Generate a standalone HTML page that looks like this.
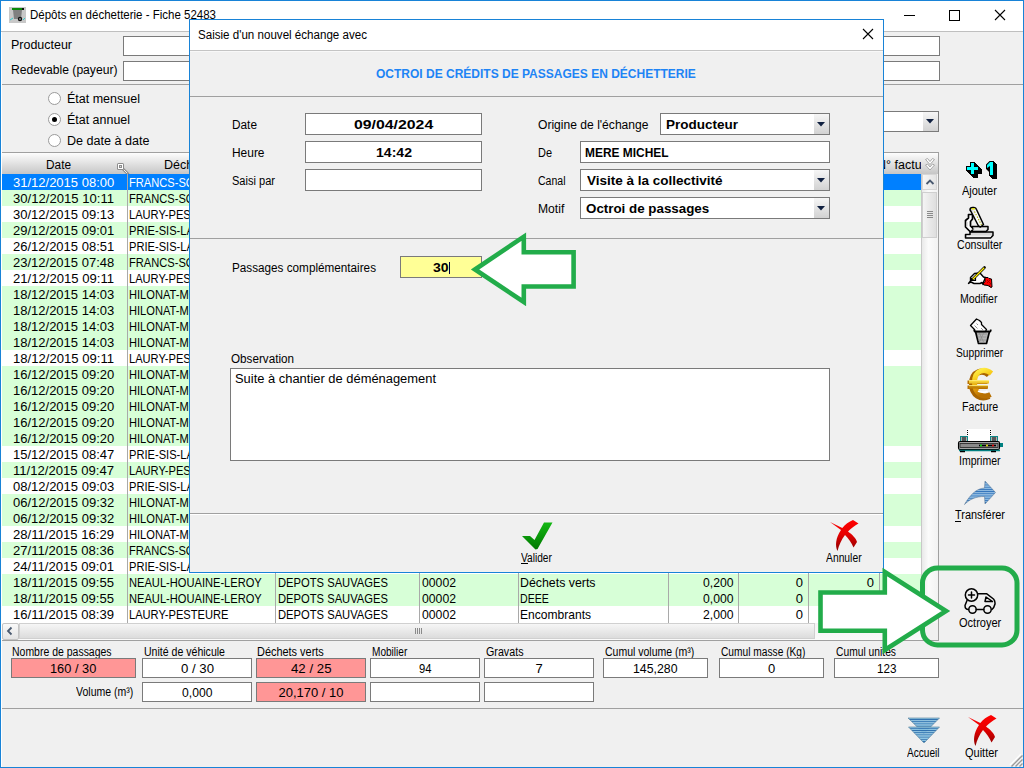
<!DOCTYPE html>
<html><head><meta charset="utf-8"><style>
html,body{margin:0;padding:0;width:1024px;height:768px;overflow:hidden;background:#f0f0f0}
body{position:relative;font-family:"Liberation Sans", sans-serif;color:#000}
div{position:absolute}
.t{white-space:pre}
svg{position:absolute}
</style></head><body>
<div style="position:absolute;left:0px;top:0px;width:1024px;height:768px;background:#f0f0f0"></div>
<div style="position:absolute;left:1px;top:1px;width:1022px;height:30px;background:#fff"></div>
<div style="position:absolute;left:1px;top:31px;width:1022px;height:1px;background:#bfbfbf"></div>
<div style="position:absolute;left:1px;top:32px;width:1px;height:735px;background:#fff"></div>
<svg style="position:absolute;left:9px;top:7px" width="17" height="16" viewBox="0 0 17 16"><rect x="0" y="0" width="17" height="16" fill="#c8c8c8"/>
<rect x="3" y="1" width="12" height="2" fill="#0a8a0a"/><rect x="13" y="1" width="2" height="2" fill="#111"/>
<path d="M4 3 L13 3 L12 12 L5 12 Z" fill="#808080"/>
<circle cx="11" cy="12" r="2.2" fill="#111"/><circle cx="11" cy="12" r="0.8" fill="#ccc"/>
<path d="M1 13 L4 11 M14 13 L16 11" stroke="#3cc" stroke-width="1"/></svg>
<div class="t" style="left:30.00px;top:9.00px;font-size:12px;line-height:12px;transform:scaleX(0.9581);transform-origin:0 0;">Dépôts en déchetterie - Fiche 52483</div>
<div style="position:absolute;left:904px;top:15px;width:11px;height:1px;background:#000"></div>
<div style="position:absolute;left:949px;top:10px;width:11px;height:11px;box-sizing:border-box;border:1px solid #000"></div>
<svg style="position:absolute;left:994px;top:9px" width="12" height="12" viewBox="0 0 12 12"><path d="M1 1 L11 11 M11 1 L1 11" stroke="#000" stroke-width="1.1"/></svg>
<div class="t" style="left:11.00px;top:39.00px;font-size:12px;line-height:12px;transform:scaleX(1.0391);transform-origin:0 0;">Producteur</div>
<div class="t" style="left:11.00px;top:64.00px;font-size:12px;line-height:12px;transform:scaleX(1.0104);transform-origin:0 0;">Redevable (payeur)</div>
<div style="position:absolute;left:123px;top:36px;width:817px;height:20px;box-sizing:border-box;border:1px solid #7a7a7a;background:#fff"></div>
<div style="position:absolute;left:123px;top:61px;width:817px;height:20px;box-sizing:border-box;border:1px solid #7a7a7a;background:#fff"></div>
<div style="position:absolute;left:2px;top:84px;width:1021px;height:1px;background:#a0a0a0"></div>
<svg style="position:absolute;left:48px;top:92px" width="13" height="13" viewBox="0 0 13 13"><circle cx="6.5" cy="6.5" r="6" fill="#fff" stroke="#9a9a9a" stroke-width="1"/></svg>
<svg style="position:absolute;left:48px;top:113px" width="13" height="13" viewBox="0 0 13 13"><circle cx="6.5" cy="6.5" r="6" fill="#fff" stroke="#9a9a9a" stroke-width="1"/><circle cx="6.5" cy="6.5" r="2.5" fill="#000"/></svg>
<svg style="position:absolute;left:48px;top:134px" width="13" height="13" viewBox="0 0 13 13"><circle cx="6.5" cy="6.5" r="6" fill="#fff" stroke="#9a9a9a" stroke-width="1"/></svg>
<div class="t" style="left:67.00px;top:92.75px;font-size:12.5px;line-height:12.5px;">État mensuel</div>
<div class="t" style="left:67.00px;top:113.75px;font-size:12.5px;line-height:12.5px;transform:scaleX(0.9960);transform-origin:0 0;">État annuel</div>
<div class="t" style="left:67.00px;top:134.75px;font-size:12.5px;line-height:12.5px;transform:scaleX(1.0059);transform-origin:0 0;">De date à date</div>
<div style="position:absolute;left:600px;top:111px;width:339px;height:21px;box-sizing:border-box;border:1px solid #7a7a7a;background:#fff"></div>
<div style="position:absolute;left:923px;top:112px;width:15px;height:19px;background:linear-gradient(#f6f6f6,#d2d2d2)"></div>
<svg style="position:absolute;left:925px;top:117px" width="10" height="8" viewBox="0 0 10 8"><path d="M1 2 L9 2 L5 6.5 Z" fill="#102040"/></svg>
<div style="position:absolute;left:2px;top:152px;width:937px;height:489px;box-sizing:border-box;border:1px solid #a0a0a0;border-left:none;background:#fff"></div>
<div style="position:absolute;left:2px;top:153px;width:936px;height:21px;background:linear-gradient(#fdfdfd,#c6c6c6)"></div>
<div class="t" style="left:46.00px;top:158.75px;font-size:12.5px;line-height:12.5px;transform:scaleX(0.9467);transform-origin:0 0;">Date</div>
<div class="t" style="left:164.00px;top:158.75px;font-size:12.5px;line-height:12.5px;">Déchetterie</div>
<div style="left:884px;top:153px;width:37px;height:21px;overflow:hidden"><div class="t" style="left:-7.00px;top:5.75px;font-size:12.5px;line-height:12.5px;">N° facture</div></div>
<svg style="position:absolute;left:112px;top:158px" width="20" height="18" viewBox="0 0 20 18"><path d="M11 11 L15.6 15.6" stroke="#8c8c8c" stroke-width="2.6" stroke-linecap="square"/><path d="M11.5 11.5 L15.2 15.2" stroke="#fff" stroke-width="0.9"/><rect x="5" y="5" width="7" height="7" rx="1.6" fill="#8c8c8c"/><rect x="6" y="6" width="5" height="5" fill="#fff"/><rect x="7" y="7" width="3" height="3" fill="#8c8c8c"/><rect x="8" y="8" width="1" height="1" fill="#ddd"/></svg>
<svg style="position:absolute;left:924px;top:157px" width="12" height="15" viewBox="0 0 12 15"><g fill="#fff" stroke="#a8a8a8" stroke-width="1" stroke-linejoin="miter"><path d="M1.5 2.5 L3.5 1.5 L6 4.5 L8.5 1.5 L10.5 2.5 L6 7.5 Z"/><path d="M1.5 8 L3.5 7 L6 10 L8.5 7 L10.5 8 L6 13 Z"/></g></svg>
<div style="position:absolute;left:2px;top:174px;width:920px;height:16px;background:#0080ff"></div>
<div class="t" style="left:13.00px;top:176.00px;font-size:13px;line-height:13px;color:#fff;">31/12/2015 08:00</div>
<div class="t" style="left:129.00px;top:176.00px;font-size:13px;line-height:13px;color:#fff;transform:scaleX(0.8550);transform-origin:0 0;">FRANCS-SOLEIL</div>
<div style="position:absolute;left:2px;top:190px;width:920px;height:16px;background:#d7ffd7"></div>
<div class="t" style="left:13.00px;top:192.00px;font-size:13px;line-height:13px;transform:scaleX(1.0075);transform-origin:0 0;">30/12/2015 10:11</div>
<div class="t" style="left:129.00px;top:192.00px;font-size:13px;line-height:13px;transform:scaleX(0.8550);transform-origin:0 0;">FRANCS-SOLEIL</div>
<div style="position:absolute;left:2px;top:206px;width:920px;height:16px;background:#fff"></div>
<div class="t" style="left:13.00px;top:208.00px;font-size:13px;line-height:13px;">30/12/2015 09:13</div>
<div class="t" style="left:129.00px;top:208.00px;font-size:13px;line-height:13px;transform:scaleX(0.8550);transform-origin:0 0;">LAURY-PESTEURE</div>
<div style="position:absolute;left:2px;top:222px;width:920px;height:16px;background:#d7ffd7"></div>
<div class="t" style="left:13.00px;top:224.00px;font-size:13px;line-height:13px;">29/12/2015 09:01</div>
<div class="t" style="left:129.00px;top:224.00px;font-size:13px;line-height:13px;transform:scaleX(0.8550);transform-origin:0 0;">PRIE-SIS-LAVAL</div>
<div style="position:absolute;left:2px;top:238px;width:920px;height:16px;background:#fff"></div>
<div class="t" style="left:13.00px;top:240.00px;font-size:13px;line-height:13px;">26/12/2015 08:51</div>
<div class="t" style="left:129.00px;top:240.00px;font-size:13px;line-height:13px;transform:scaleX(0.8550);transform-origin:0 0;">PRIE-SIS-LAVAL</div>
<div style="position:absolute;left:2px;top:254px;width:920px;height:16px;background:#d7ffd7"></div>
<div class="t" style="left:13.00px;top:256.00px;font-size:13px;line-height:13px;">23/12/2015 07:48</div>
<div class="t" style="left:129.00px;top:256.00px;font-size:13px;line-height:13px;transform:scaleX(0.8550);transform-origin:0 0;">FRANCS-SOLEIL</div>
<div style="position:absolute;left:2px;top:270px;width:920px;height:16px;background:#fff"></div>
<div class="t" style="left:13.00px;top:272.00px;font-size:13px;line-height:13px;transform:scaleX(1.0075);transform-origin:0 0;">21/12/2015 09:11</div>
<div class="t" style="left:129.00px;top:272.00px;font-size:13px;line-height:13px;transform:scaleX(0.8550);transform-origin:0 0;">LAURY-PESTEURE</div>
<div style="position:absolute;left:2px;top:286px;width:920px;height:16px;background:#d7ffd7"></div>
<div class="t" style="left:13.00px;top:288.00px;font-size:13px;line-height:13px;">18/12/2015 14:03</div>
<div class="t" style="left:129.00px;top:288.00px;font-size:13px;line-height:13px;transform:scaleX(0.8550);transform-origin:0 0;">HILONAT-MONT</div>
<div style="position:absolute;left:2px;top:302px;width:920px;height:16px;background:#d7ffd7"></div>
<div class="t" style="left:13.00px;top:304.00px;font-size:13px;line-height:13px;">18/12/2015 14:03</div>
<div class="t" style="left:129.00px;top:304.00px;font-size:13px;line-height:13px;transform:scaleX(0.8550);transform-origin:0 0;">HILONAT-MONT</div>
<div style="position:absolute;left:2px;top:318px;width:920px;height:16px;background:#d7ffd7"></div>
<div class="t" style="left:13.00px;top:320.00px;font-size:13px;line-height:13px;">18/12/2015 14:03</div>
<div class="t" style="left:129.00px;top:320.00px;font-size:13px;line-height:13px;transform:scaleX(0.8550);transform-origin:0 0;">HILONAT-MONT</div>
<div style="position:absolute;left:2px;top:334px;width:920px;height:16px;background:#d7ffd7"></div>
<div class="t" style="left:13.00px;top:336.00px;font-size:13px;line-height:13px;">18/12/2015 14:03</div>
<div class="t" style="left:129.00px;top:336.00px;font-size:13px;line-height:13px;transform:scaleX(0.8550);transform-origin:0 0;">HILONAT-MONT</div>
<div style="position:absolute;left:2px;top:350px;width:920px;height:16px;background:#fff"></div>
<div class="t" style="left:13.00px;top:352.00px;font-size:13px;line-height:13px;transform:scaleX(1.0075);transform-origin:0 0;">18/12/2015 09:11</div>
<div class="t" style="left:129.00px;top:352.00px;font-size:13px;line-height:13px;transform:scaleX(0.8550);transform-origin:0 0;">LAURY-PESTEURE</div>
<div style="position:absolute;left:2px;top:366px;width:920px;height:16px;background:#d7ffd7"></div>
<div class="t" style="left:13.00px;top:368.00px;font-size:13px;line-height:13px;">16/12/2015 09:20</div>
<div class="t" style="left:129.00px;top:368.00px;font-size:13px;line-height:13px;transform:scaleX(0.8550);transform-origin:0 0;">HILONAT-MONT</div>
<div style="position:absolute;left:2px;top:382px;width:920px;height:16px;background:#d7ffd7"></div>
<div class="t" style="left:13.00px;top:384.00px;font-size:13px;line-height:13px;">16/12/2015 09:20</div>
<div class="t" style="left:129.00px;top:384.00px;font-size:13px;line-height:13px;transform:scaleX(0.8550);transform-origin:0 0;">HILONAT-MONT</div>
<div style="position:absolute;left:2px;top:398px;width:920px;height:16px;background:#d7ffd7"></div>
<div class="t" style="left:13.00px;top:400.00px;font-size:13px;line-height:13px;">16/12/2015 09:20</div>
<div class="t" style="left:129.00px;top:400.00px;font-size:13px;line-height:13px;transform:scaleX(0.8550);transform-origin:0 0;">HILONAT-MONT</div>
<div style="position:absolute;left:2px;top:414px;width:920px;height:16px;background:#d7ffd7"></div>
<div class="t" style="left:13.00px;top:416.00px;font-size:13px;line-height:13px;">16/12/2015 09:20</div>
<div class="t" style="left:129.00px;top:416.00px;font-size:13px;line-height:13px;transform:scaleX(0.8550);transform-origin:0 0;">HILONAT-MONT</div>
<div style="position:absolute;left:2px;top:430px;width:920px;height:16px;background:#d7ffd7"></div>
<div class="t" style="left:13.00px;top:432.00px;font-size:13px;line-height:13px;">16/12/2015 09:20</div>
<div class="t" style="left:129.00px;top:432.00px;font-size:13px;line-height:13px;transform:scaleX(0.8550);transform-origin:0 0;">HILONAT-MONT</div>
<div style="position:absolute;left:2px;top:446px;width:920px;height:16px;background:#fff"></div>
<div class="t" style="left:13.00px;top:448.00px;font-size:13px;line-height:13px;">15/12/2015 08:47</div>
<div class="t" style="left:129.00px;top:448.00px;font-size:13px;line-height:13px;transform:scaleX(0.8550);transform-origin:0 0;">PRIE-SIS-LAVAL</div>
<div style="position:absolute;left:2px;top:462px;width:920px;height:16px;background:#d7ffd7"></div>
<div class="t" style="left:13.00px;top:464.00px;font-size:13px;line-height:13px;transform:scaleX(1.0075);transform-origin:0 0;">11/12/2015 09:47</div>
<div class="t" style="left:129.00px;top:464.00px;font-size:13px;line-height:13px;transform:scaleX(0.8550);transform-origin:0 0;">LAURY-PESTEURE</div>
<div style="position:absolute;left:2px;top:478px;width:920px;height:16px;background:#fff"></div>
<div class="t" style="left:13.00px;top:480.00px;font-size:13px;line-height:13px;">08/12/2015 09:03</div>
<div class="t" style="left:129.00px;top:480.00px;font-size:13px;line-height:13px;transform:scaleX(0.8550);transform-origin:0 0;">PRIE-SIS-LAVAL</div>
<div style="position:absolute;left:2px;top:494px;width:920px;height:16px;background:#d7ffd7"></div>
<div class="t" style="left:13.00px;top:496.00px;font-size:13px;line-height:13px;">06/12/2015 09:32</div>
<div class="t" style="left:129.00px;top:496.00px;font-size:13px;line-height:13px;transform:scaleX(0.8550);transform-origin:0 0;">HILONAT-MONT</div>
<div style="position:absolute;left:2px;top:510px;width:920px;height:16px;background:#d7ffd7"></div>
<div class="t" style="left:13.00px;top:512.00px;font-size:13px;line-height:13px;">06/12/2015 09:32</div>
<div class="t" style="left:129.00px;top:512.00px;font-size:13px;line-height:13px;transform:scaleX(0.8550);transform-origin:0 0;">HILONAT-MONT</div>
<div style="position:absolute;left:2px;top:526px;width:920px;height:16px;background:#fff"></div>
<div class="t" style="left:13.00px;top:528.00px;font-size:13px;line-height:13px;transform:scaleX(1.0075);transform-origin:0 0;">28/11/2015 16:29</div>
<div class="t" style="left:129.00px;top:528.00px;font-size:13px;line-height:13px;transform:scaleX(0.8550);transform-origin:0 0;">HILONAT-MONT</div>
<div style="position:absolute;left:2px;top:542px;width:920px;height:16px;background:#d7ffd7"></div>
<div class="t" style="left:13.00px;top:544.00px;font-size:13px;line-height:13px;transform:scaleX(1.0075);transform-origin:0 0;">27/11/2015 08:36</div>
<div class="t" style="left:129.00px;top:544.00px;font-size:13px;line-height:13px;transform:scaleX(0.8550);transform-origin:0 0;">FRANCS-SOLEIL</div>
<div style="position:absolute;left:2px;top:558px;width:920px;height:16px;background:#fff"></div>
<div class="t" style="left:13.00px;top:560.00px;font-size:13px;line-height:13px;transform:scaleX(1.0075);transform-origin:0 0;">24/11/2015 09:01</div>
<div class="t" style="left:129.00px;top:560.00px;font-size:13px;line-height:13px;transform:scaleX(0.8550);transform-origin:0 0;">PRIE-SIS-LAVAL</div>
<div style="position:absolute;left:2px;top:574px;width:920px;height:16px;background:#d7ffd7"></div>
<div class="t" style="left:13.00px;top:576.00px;font-size:13px;line-height:13px;transform:scaleX(1.0075);transform-origin:0 0;">18/11/2015 09:55</div>
<div class="t" style="left:129.00px;top:576.00px;font-size:13px;line-height:13px;transform:scaleX(0.8550);transform-origin:0 0;">NEAUL-HOUAINE-LEROY</div>
<div class="t" style="left:278.00px;top:576.00px;font-size:13px;line-height:13px;transform:scaleX(0.8618);transform-origin:0 0;">DEPOTS SAUVAGES</div>
<div class="t" style="left:421.50px;top:576.00px;font-size:13px;line-height:13px;transform:scaleX(0.9404);transform-origin:0 0;">00002</div>
<div class="t" style="left:520.30px;top:576.00px;font-size:13px;line-height:13px;transform:scaleX(0.9499);transform-origin:0 0;">Déchets verts</div>
<div class="t" style="left:702.50px;top:576.00px;font-size:13px;line-height:13px;transform:scaleX(0.9371);transform-origin:0 0;">0,200</div>
<div class="t" style="left:795.77px;top:576.00px;font-size:13px;line-height:13px;">0</div>
<div class="t" style="left:866.77px;top:576.00px;font-size:13px;line-height:13px;">0</div>
<div style="position:absolute;left:2px;top:590px;width:920px;height:16px;background:#d7ffd7"></div>
<div class="t" style="left:13.00px;top:592.00px;font-size:13px;line-height:13px;transform:scaleX(1.0075);transform-origin:0 0;">18/11/2015 09:55</div>
<div class="t" style="left:129.00px;top:592.00px;font-size:13px;line-height:13px;transform:scaleX(0.8550);transform-origin:0 0;">NEAUL-HOUAINE-LEROY</div>
<div class="t" style="left:278.00px;top:592.00px;font-size:13px;line-height:13px;transform:scaleX(0.8618);transform-origin:0 0;">DEPOTS SAUVAGES</div>
<div class="t" style="left:421.50px;top:592.00px;font-size:13px;line-height:13px;transform:scaleX(0.9404);transform-origin:0 0;">00002</div>
<div class="t" style="left:520.30px;top:592.00px;font-size:13px;line-height:13px;transform:scaleX(0.8134);transform-origin:0 0;">DEEE</div>
<div class="t" style="left:702.50px;top:592.00px;font-size:13px;line-height:13px;transform:scaleX(0.9371);transform-origin:0 0;">0,000</div>
<div class="t" style="left:795.77px;top:592.00px;font-size:13px;line-height:13px;">0</div>
<div class="t" style="left:866.77px;top:592.00px;font-size:13px;line-height:13px;">0</div>
<div style="position:absolute;left:2px;top:606px;width:920px;height:16px;background:#fff"></div>
<div class="t" style="left:13.00px;top:608.00px;font-size:13px;line-height:13px;transform:scaleX(1.0075);transform-origin:0 0;">16/11/2015 08:39</div>
<div class="t" style="left:129.00px;top:608.00px;font-size:13px;line-height:13px;transform:scaleX(0.8550);transform-origin:0 0;">LAURY-PESTEURE</div>
<div class="t" style="left:278.00px;top:608.00px;font-size:13px;line-height:13px;transform:scaleX(0.8618);transform-origin:0 0;">DEPOTS SAUVAGES</div>
<div class="t" style="left:421.50px;top:608.00px;font-size:13px;line-height:13px;transform:scaleX(0.9404);transform-origin:0 0;">00002</div>
<div class="t" style="left:520.30px;top:608.00px;font-size:13px;line-height:13px;transform:scaleX(0.9270);transform-origin:0 0;">Encombrants</div>
<div class="t" style="left:702.50px;top:608.00px;font-size:13px;line-height:13px;transform:scaleX(0.9371);transform-origin:0 0;">2,000</div>
<div class="t" style="left:795.77px;top:608.00px;font-size:13px;line-height:13px;">0</div>
<div class="t" style="left:866.77px;top:608.00px;font-size:13px;line-height:13px;">0</div>
<div style="position:absolute;left:127px;top:174px;width:1px;height:449px;background:#a9a9a9"></div>
<div style="position:absolute;left:275px;top:174px;width:1px;height:449px;background:#a9a9a9"></div>
<div style="position:absolute;left:419px;top:174px;width:1px;height:449px;background:#a9a9a9"></div>
<div style="position:absolute;left:518px;top:174px;width:1px;height:449px;background:#a9a9a9"></div>
<div style="position:absolute;left:668px;top:174px;width:1px;height:449px;background:#a9a9a9"></div>
<div style="position:absolute;left:738px;top:174px;width:1px;height:449px;background:#a9a9a9"></div>
<div style="position:absolute;left:808px;top:174px;width:1px;height:449px;background:#a9a9a9"></div>
<div style="position:absolute;left:879px;top:174px;width:1px;height:449px;background:#a9a9a9"></div>
<div style="position:absolute;left:922px;top:174px;width:16px;height:449px;background:linear-gradient(90deg,#e9e9e9,#fbfbfb 40%,#f2f2f2)"></div>
<div style="position:absolute;left:921px;top:174px;width:1px;height:466px;background:#c8c8c8"></div>
<div style="position:absolute;left:922px;top:174px;width:15px;height:16px;box-sizing:border-box;border:1px solid #d6d6d6;background:linear-gradient(90deg,#f6f6f6,#e4e4e4)"></div>
<svg style="position:absolute;left:925px;top:178px" width="10" height="8" viewBox="0 0 10 8"><path d="M1.5 6 L5 2.5 L8.5 6" fill="none" stroke="#4a5a70" stroke-width="1.8"/></svg>
<div style="position:absolute;left:922px;top:192px;width:15px;height:46px;box-sizing:border-box;border:1px solid #cfcfcf;background:linear-gradient(90deg,#f4f4f4,#dedede)"></div>
<div style="position:absolute;left:927px;top:211px;width:6px;height:1px;background:#8a8a8a"></div>
<div style="position:absolute;left:927px;top:213px;width:6px;height:1px;background:#8a8a8a"></div>
<div style="position:absolute;left:927px;top:215px;width:6px;height:1px;background:#8a8a8a"></div>
<div style="position:absolute;left:927px;top:217px;width:6px;height:1px;background:#8a8a8a"></div>
<div style="position:absolute;left:2px;top:623px;width:920px;height:17px;background:linear-gradient(#f4f4f4,#fafafa)"></div>
<div style="position:absolute;left:2px;top:623px;width:17px;height:17px;box-sizing:border-box;border:1px solid #c4c4c4;border-radius:2px;background:linear-gradient(#f9f9f9,#e4e4e4)"></div>
<svg style="position:absolute;left:5px;top:626px" width="10" height="10" viewBox="0 0 10 10"><path d="M6.5 1.5 L3 5 L6.5 8.5" fill="none" stroke="#4a5a70" stroke-width="1.8"/></svg>
<div style="position:absolute;left:19px;top:623px;width:796px;height:16px;box-sizing:border-box;border:1px solid #d0d0d0;background:linear-gradient(#f6f6f6,#dcdcdc)"></div>
<div style="position:absolute;left:415px;top:628px;width:1px;height:6px;background:#8a8a8a"></div>
<div style="position:absolute;left:417px;top:628px;width:1px;height:6px;background:#8a8a8a"></div>
<div style="position:absolute;left:419px;top:628px;width:1px;height:6px;background:#8a8a8a"></div>
<div style="position:absolute;left:421px;top:628px;width:1px;height:6px;background:#8a8a8a"></div>
<div style="position:absolute;left:922px;top:623px;width:16px;height:17px;background:#f0f0f0"></div>
<div class="t" style="left:962.00px;top:185.00px;font-size:12px;line-height:12px;transform:scaleX(0.9150);transform-origin:0 0;">Ajouter</div>
<div class="t" style="left:956.75px;top:239.00px;font-size:12px;line-height:12px;transform:scaleX(0.8820);transform-origin:0 0;">Consulter</div>
<div class="t" style="left:960.45px;top:293.00px;font-size:12px;line-height:12px;transform:scaleX(0.8785);transform-origin:0 0;">Modifier</div>
<div class="t" style="left:955.60px;top:347.00px;font-size:12px;line-height:12px;transform:scaleX(0.8526);transform-origin:0 0;">Supprimer</div>
<div class="t" style="left:962.00px;top:401.00px;font-size:12px;line-height:12px;transform:scaleX(0.8897);transform-origin:0 0;">Facture</div>
<div class="t" style="left:958.75px;top:455.00px;font-size:12px;line-height:12px;transform:scaleX(0.8766);transform-origin:0 0;">Imprimer</div>
<div class="t" style="left:955.00px;top:509.00px;font-size:12px;line-height:12px;transform:scaleX(0.9106);transform-origin:0 0;">Transférer</div>
<div style="position:absolute;left:955px;top:521px;width:6px;height:1px;background:#000"></div>
<div class="t" style="left:958.65px;top:617.00px;font-size:12px;line-height:12px;transform:scaleX(0.9193);transform-origin:0 0;">Octroyer</div>
<svg style="position:absolute;left:962px;top:156px" width="38" height="26" viewBox="0 0 38 26">
<g fill="#000" stroke="#000" stroke-width="2" stroke-linejoin="miter">
<path id="pl" d="M9 7 h3 v4 h4 v3 h-4 v4 h-3 v-4 h-4 v-3 h4 z"/>
<path d="M10 8 h3 v4 h4 v3 h-4 v4 h-3 v-4 h-4 v-3 h4 z"/>
<path d="M11 9 h3 v4 h4 v3 h-4 v4 h-3 v-4 h-4 v-3 h4 z"/>
<path d="M12 10 h3 v4 h4 v3 h-4 v4 h-3 v-4 h-4 v-3 h4 z"/>
<path d="M28 6 h3 v13 h-3 v-9 l-3 2 v-3 z"/>
<path d="M29 7 h3 v13 h-3 v-9 l-3 2 v-3 z"/>
<path d="M30 8 h3 v13 h-3 v-9 l-3 2 v-3 z"/>
<path d="M31 9 h3 v13 h-3 v-9 l-3 2 v-3 z"/>
</g>
<g fill="#00ffff"><path d="M9 7 h3 v4 h4 v3 h-4 v4 h-3 v-4 h-4 v-3 h4 z"/><path d="M28 6 h3 v13 h-3 v-9 l-3 2 v-3 z"/></g></svg>
<svg style="position:absolute;left:962px;top:204px" width="36" height="38" viewBox="0 0 36 38">
<defs><linearGradient id="tb" x1="0" y1="0" x2="1" y2="0"><stop offset="0" stop-color="#d0d0d0"/><stop offset="0.5" stop-color="#ffffff"/><stop offset="1" stop-color="#e8e8e8"/></linearGradient></defs>
<g stroke="#000" stroke-width="1.5" stroke-linejoin="round">
<path d="M3.5 30.5 L8 30.5 L8 28 L31 28 L31 31.5 L28.5 34 L3.5 34 Z" fill="#d8d8d8"/>
<path d="M10 22.5 L26 22.5 L26 25.5 L24 27.5 L10 27.5 Z" fill="#e0e0e0"/>
<path d="M6.5 10.5 L10.5 10.5 L10.5 15 L8.5 17.5 L8.5 22 L11.5 25 L8.5 28 L3.5 23 L3.5 16.5 L6.5 14 Z" fill="#fff" stroke-width="1.7"/>
<path d="M8 6 Q8 3.5 10.5 3.5 L12 3.5 Q14 3.5 14.5 5.5 L21.5 20.5 L18.5 23 L16.5 22 L9 7.5 Z" fill="url(#tb)"/>
</g>
<path d="M5 32.2 L29 32.2" stroke="#f6f6f6" stroke-width="1.2"/>
<path d="M11 25 L24 25" stroke="#f6f6f6" stroke-width="1"/>
<path d="M9.5 4.8 L13 4.8" stroke="#e0e000" stroke-width="1.4"/>
<path d="M12.5 7.5 L19.5 21" stroke="#b0b000" stroke-width="1.1" stroke-dasharray="1.4 1.4"/>
<path d="M5 18 L5 22.5" stroke="#c8c8c8" stroke-width="1"/></svg>
<svg style="position:absolute;left:964px;top:262px" width="32" height="30" viewBox="0 0 32 30">
<path d="M4.5 21.5 L6.5 19 L6.5 15.5 L10.5 11.5 L16 11 L19.5 15 L21.5 15.5 L19.5 20 L19 22.5 L18 20.5 L16 21.5 L10 21.5 L7 20 Z" fill="#fff" stroke="#000" stroke-width="1.4" stroke-linejoin="round"/>
<path d="M7.5 16.5 L11.5 16.5 L11.5 18.5 L7.5 18.5 Z" fill="none" stroke="#000" stroke-width="1.2"/>
<path d="M8.5 17.5 L20.5 5.5" stroke="#000" stroke-width="2.7" stroke-linecap="round"/>
<path d="M8.8 17.2 L20.2 5.8" stroke="#ffee00" stroke-width="1.3"/>
<path d="M21 15.5 L24 15.5 L25 16.5 L27.5 17 L28 25 L27 25.5 L24 23.5 L20 23 L19 22 L21 19.5 Z" fill="#ff0000" stroke="#000" stroke-width="1"/>
<path d="M23 18 L27 22 M23 21 L26 18 M25 24 L27 21" stroke="#a00000" stroke-width="0.9"/></svg>
<svg style="position:absolute;left:966px;top:316px" width="28" height="30" viewBox="0 0 28 30">
<path d="M9.5 15.5 L23.5 15.5 L20.5 27.5 L12.5 27.5 Z" fill="#b4b4b4" stroke="#000" stroke-width="1.7" stroke-linejoin="round"/>
<path d="M11 18 L21 18 M11.5 21 L20.5 21 M12 24 L20 24 M13 16 L18 27 M18 16 L13 27" stroke="#8a8a8a" stroke-width="0.7"/>
<path d="M4.5 9.5 L10.5 3 L13.5 4.5 L15.5 6.5 L15.5 8.5 L20.5 13.5 L19.5 15.5 L9 15.5 L8.5 13.5 Z" fill="#fff" stroke="#000" stroke-width="1.3" stroke-linejoin="round"/>
<path d="M10.5 7.5 L12 9 M8.5 9.5 L11.5 12.5 M13.5 10.5 L13.5 10.5 M15 12 L17 14" stroke="#888" stroke-width="0.9"/>
<path d="M8 15.5 L25 15.5" stroke="#000" stroke-width="1.6"/>
<path d="M8 15.5 L8.5 13.5 M25 15.5 L24.5 13.5" stroke="#000" stroke-width="1.6"/></svg>
<svg style="position:absolute;left:964px;top:366px" width="32" height="38" viewBox="0 0 32 38">
<defs><linearGradient id="eg" x1="0" y1="0" x2="0.3" y2="1"><stop offset="0" stop-color="#fff24a"/><stop offset="0.4" stop-color="#f6c414"/><stop offset="0.75" stop-color="#d89008"/><stop offset="1" stop-color="#b87000"/></linearGradient>
<linearGradient id="eb" x1="0" y1="0" x2="0" y2="1"><stop offset="0" stop-color="#ffe040"/><stop offset="1" stop-color="#b87400"/></linearGradient></defs>
<path d="M25 9 C19 3 8 5 8 18 C8 29 17 34 25 30" fill="none" stroke="#a86400" stroke-width="6"/>
<path d="M3.5 14.5 h20 v3.5 h-20 z M3.5 19.5 h20 v3.5 h-20 z" fill="#b87000"/>
<path d="M27.5 7.5 C21 2 10.5 3.5 10.5 16.5 C10.5 28 19 32.5 26.5 28.5" fill="none" stroke="url(#eg)" stroke-width="5"/>
<path d="M5 14.5 h20 v3 h-20 z M5 19.5 h19 v3 h-19 z" fill="url(#eb)"/>
<path d="M5 14.5 h20 M5 19.5 h19" stroke="#fff080" stroke-width="0.8"/>
<path d="M14 25 C17 26.5 21 26.5 23.5 25" stroke="#fff" stroke-width="1.6" fill="none"/></svg>
<svg style="position:absolute;left:956px;top:426px" width="50" height="28" viewBox="0 0 50 28">
<rect x="10.5" y="3" width="25" height="12" fill="#fff"/>
<path d="M11.5 4 v6 M34.5 4 v6" stroke="#000" stroke-width="1" stroke-dasharray="1 1"/>
<rect x="4.5" y="10.5" width="7" height="5" fill="#b0b0b0" stroke="#108888" stroke-width="1"/>
<rect x="34.5" y="10.5" width="7" height="5" fill="#b0b0b0" stroke="#108888" stroke-width="1"/>
<path d="M7 11 v4 M9 11 v4 M37 11 v4 M39 11 v4" stroke="#000" stroke-width="1"/>
<rect x="2.5" y="15.5" width="41" height="8" rx="1.5" fill="#a4a4a4" stroke="#000" stroke-width="1.1"/>
<rect x="4" y="17.5" width="38" height="4" fill="#8a8a8a" stroke="#222" stroke-width="0.8"/>
<path d="M23 19.5 h17" stroke="#000" stroke-width="1.6"/>
<circle cx="25" cy="19.5" r="0.9" fill="#0f0"/><circle cx="31" cy="19.5" r="0.9" fill="#ff0"/><circle cx="37" cy="19.5" r="0.9" fill="#f00"/>
<rect x="44" y="17" width="3" height="4" fill="#008080"/>
<path d="M3 24.5 h41" stroke="#008080" stroke-width="1.4"/>
<path d="M4 25.5 h5 M35 25.5 h5" stroke="#000" stroke-width="1.5"/></svg>
<svg style="position:absolute;left:960px;top:478px" width="40" height="30" viewBox="0 0 40 30">
<defs><pattern id="st" width="8" height="2.2" patternUnits="userSpaceOnUse"><rect width="8" height="1.1" fill="#2d6fb8"/><rect y="1.1" width="8" height="1.1" fill="#8bbce4"/></pattern></defs>
<path d="M4.5 26.5 C10 17 16 10.5 24.5 10 L25 3 L35.5 14.5 L25 26 L24.5 18.5 C16 18.5 10 21 4.5 26.5 Z" fill="url(#st)" stroke="#4a6a8a" stroke-width="0.5"/></svg>
<svg style="position:absolute;left:960px;top:584px" width="40" height="34" viewBox="0 0 40 34">
<g fill="none" stroke="#000" stroke-width="1.5" stroke-linejoin="round" stroke-linecap="round">
<path d="M18.3 9.7 L26.5 9.7 L33.5 15 Q35 16.5 35 19 L35 20 Q34 24 32 25.5"/>
<path d="M26 13 L32.5 17.5 L25 17.5 Z"/>
<path d="M7 16.5 L5 21.5 Q5 25.5 8.5 25.5"/>
<path d="M16.3 25.5 L23.7 25.5"/>
<circle cx="11.5" cy="11" r="6.2"/>
<path d="M8.5 11 h6 M11.5 8 v6"/>
<circle cx="12.5" cy="25.5" r="3.7"/>
<circle cx="27.5" cy="25.5" r="3.7"/>
</g></svg>
<div class="t" style="left:12.40px;top:646.00px;font-size:12px;line-height:12px;transform:scaleX(0.8731);transform-origin:0 0;">Nombre de passages</div>
<div class="t" style="left:143.80px;top:646.00px;font-size:12px;line-height:12px;transform:scaleX(0.8798);transform-origin:0 0;">Unité de véhicule</div>
<div class="t" style="left:257.30px;top:646.00px;font-size:12px;line-height:12px;transform:scaleX(0.9106);transform-origin:0 0;">Déchets verts</div>
<div class="t" style="left:371.50px;top:646.00px;font-size:12px;line-height:12px;transform:scaleX(0.8402);transform-origin:0 0;">Mobilier</div>
<div class="t" style="left:485.50px;top:646.00px;font-size:12px;line-height:12px;transform:scaleX(0.8925);transform-origin:0 0;">Gravats</div>
<div class="t" style="left:604.70px;top:646.00px;font-size:12px;line-height:12px;transform:scaleX(0.8754);transform-origin:0 0;">Cumul volume (m³)</div>
<div class="t" style="left:720.80px;top:646.00px;font-size:12px;line-height:12px;transform:scaleX(0.8494);transform-origin:0 0;">Cumul masse (Kg)</div>
<div class="t" style="left:835.70px;top:646.00px;font-size:12px;line-height:12px;transform:scaleX(0.8568);transform-origin:0 0;">Cumul unites</div>
<div style="position:absolute;left:11px;top:658px;width:125px;height:20px;box-sizing:border-box;border:1px solid #7a7a7a;background:#ff9696"></div>
<div class="t" style="left:50.35px;top:662.00px;font-size:13px;line-height:13px;transform:scaleX(0.9851);transform-origin:0 0;">160 / 30</div>
<div style="position:absolute;left:142px;top:658px;width:110px;height:20px;box-sizing:border-box;border:1px solid #7a7a7a;background:#fff"></div>
<div class="t" style="left:180.50px;top:662.00px;font-size:13px;line-height:13px;transform:scaleX(1.0144);transform-origin:0 0;">0 / 30</div>
<div style="position:absolute;left:256px;top:658px;width:110px;height:20px;box-sizing:border-box;border:1px solid #7a7a7a;background:#ff9696"></div>
<div class="t" style="left:290.75px;top:662.00px;font-size:13px;line-height:13px;transform:scaleX(1.0185);transform-origin:0 0;">42 / 25</div>
<div style="position:absolute;left:370px;top:658px;width:110px;height:20px;box-sizing:border-box;border:1px solid #7a7a7a;background:#fff"></div>
<div class="t" style="left:418.75px;top:662.00px;font-size:13px;line-height:13px;transform:scaleX(0.8639);transform-origin:0 0;">94</div>
<div style="position:absolute;left:484px;top:658px;width:110px;height:20px;box-sizing:border-box;border:1px solid #7a7a7a;background:#fff"></div>
<div class="t" style="left:535.38px;top:662.00px;font-size:13px;line-height:13px;">7</div>
<div style="position:absolute;left:603px;top:658px;width:105px;height:20px;box-sizing:border-box;border:1px solid #7a7a7a;background:#fff"></div>
<div class="t" style="left:633.25px;top:662.00px;font-size:13px;line-height:13px;transform:scaleX(0.9468);transform-origin:0 0;">145,280</div>
<div style="position:absolute;left:719px;top:658px;width:105px;height:20px;box-sizing:border-box;border:1px solid #7a7a7a;background:#fff"></div>
<div class="t" style="left:767.88px;top:662.00px;font-size:13px;line-height:13px;">0</div>
<div style="position:absolute;left:834px;top:658px;width:105px;height:20px;box-sizing:border-box;border:1px solid #7a7a7a;background:#fff"></div>
<div class="t" style="left:876.75px;top:662.00px;font-size:13px;line-height:13px;transform:scaleX(0.8985);transform-origin:0 0;">123</div>
<div class="t" style="left:75.70px;top:686.00px;font-size:12px;line-height:12px;transform:scaleX(0.8769);transform-origin:0 0;">Volume (m³)</div>
<div style="position:absolute;left:142px;top:682px;width:110px;height:20px;box-sizing:border-box;border:1px solid #7a7a7a;background:#fff"></div>
<div class="t" style="left:181.80px;top:686.00px;font-size:13px;line-height:13px;transform:scaleX(0.9340);transform-origin:0 0;">0,000</div>
<div style="position:absolute;left:256px;top:682px;width:110px;height:20px;box-sizing:border-box;border:1px solid #7a7a7a;background:#ff9696"></div>
<div class="t" style="left:278.50px;top:686.00px;font-size:13px;line-height:13px;">20,170 / 10</div>
<div style="position:absolute;left:370px;top:682px;width:110px;height:20px;box-sizing:border-box;border:1px solid #7a7a7a;background:#fff"></div>
<div style="position:absolute;left:484px;top:682px;width:110px;height:20px;box-sizing:border-box;border:1px solid #7a7a7a;background:#fff"></div>
<div style="position:absolute;left:2px;top:708px;width:1021px;height:1px;background:#a0a0a0"></div>
<svg style="position:absolute;left:904px;top:712px" width="40" height="36" viewBox="0 0 40 36">
<defs><pattern id="st2" width="40" height="2.2" patternUnits="userSpaceOnUse" y="0.5"><rect width="40" height="1.1" fill="#2e6fae"/><rect y="1.1" width="40" height="1.1" fill="#8ec8e4"/></pattern></defs>
<path d="M4 6 L35.5 6 L20 21.5 Z" fill="url(#st2)" stroke="#4d7a99" stroke-width="0.6"/>
<path d="M4.5 15 L35.5 15 L20 31 Z" fill="url(#st2)" stroke="#4d7a99" stroke-width="0.6"/></svg>
<div class="t" style="left:907.00px;top:747.00px;font-size:12px;line-height:12px;transform:scaleX(0.8401);transform-origin:0 0;">Accueil</div>
<svg style="position:absolute;left:964px;top:711px" width="36" height="38" viewBox="0 0 36 38">
<defs><linearGradient id="rg964" x1="0" y1="0" x2="0" y2="1"><stop offset="0" stop-color="#ff0000"/><stop offset="0.45" stop-color="#e80000"/><stop offset="1" stop-color="#8a0000"/></linearGradient></defs>
<path d="M4 6 L16.3 11.9 C19 8.5 23 5.5 27 4 L32.5 7.5 C28.5 9.5 25 12.5 22 15.5 C26 18.5 30 22 31 26 L27.5 31.5 C25.5 26.5 22.5 22.5 19 19 C15.5 23.5 13 29 11.5 35 C9 30 9.5 22 15 14 Z" fill="url(#rg964)"/></svg>
<div class="t" style="left:965.00px;top:747.00px;font-size:12px;line-height:12px;transform:scaleX(0.9163);transform-origin:0 0;">Quitter</div>
<svg style="position:absolute;left:1009px;top:753px" width="14" height="14" viewBox="0 0 14 14"><path d="M13 2 L2 13 M13 6 L6 13 M13 10 L10 13" stroke="#fff" stroke-width="1.2" transform="translate(-1,-1)"/><path d="M13.5 2.5 L2.5 13.5 M13.5 6.5 L6.5 13.5 M13.5 10.5 L10.5 13.5" stroke="#9a9a9a" stroke-width="1.4"/></svg>
<div style="position:absolute;left:0px;top:0px;width:1024px;height:768px;box-sizing:border-box;border:1px solid #1883d7"></div>
<div style="position:absolute;left:189px;top:19px;width:695px;height:554px;box-sizing:border-box;border:1px solid #1883d7;background:#f0f0f0"></div>
<div style="position:absolute;left:190px;top:20px;width:693px;height:30px;background:#fff"></div>
<div style="position:absolute;left:190px;top:50px;width:693px;height:1px;background:#c4c4c4"></div>
<div style="position:absolute;left:190px;top:51px;width:693px;height:1px;background:#f8f8f8"></div>
<div class="t" style="left:198.00px;top:29.00px;font-size:12px;line-height:12px;transform:scaleX(0.9652);transform-origin:0 0;">Saisie d'un nouvel échange avec</div>
<svg style="position:absolute;left:862px;top:28px" width="12" height="12" viewBox="0 0 12 12"><path d="M1 1 L11 11 M11 1 L1 11" stroke="#000" stroke-width="1.1"/></svg>
<div class="t" style="left:376.00px;top:68.00px;font-size:12px;line-height:12px;font-weight:700;color:#1e84f5;">OCTROI DE CRÉDITS DE PASSAGES EN DÉCHETTERIE</div>
<div style="position:absolute;left:190px;top:96px;width:693px;height:1px;background:#a0a0a0"></div>
<div class="t" style="left:232.00px;top:119.00px;font-size:12px;line-height:12px;transform:scaleX(0.9858);transform-origin:0 0;">Date</div>
<div class="t" style="left:232.00px;top:147.00px;font-size:12px;line-height:12px;transform:scaleX(0.9943);transform-origin:0 0;">Heure</div>
<div class="t" style="left:232.00px;top:175.00px;font-size:12px;line-height:12px;transform:scaleX(0.9210);transform-origin:0 0;">Saisi par</div>
<div style="position:absolute;left:305px;top:113px;width:177px;height:22px;box-sizing:border-box;border:1px solid #7a7a7a;background:#fff"></div>
<div style="position:absolute;left:305px;top:141px;width:177px;height:22px;box-sizing:border-box;border:1px solid #7a7a7a;background:#fff"></div>
<div style="position:absolute;left:305px;top:169px;width:177px;height:22px;box-sizing:border-box;border:1px solid #7a7a7a;background:#fff"></div>
<div class="t" style="left:354.30px;top:118.75px;font-size:12.5px;line-height:12.5px;font-weight:700;transform:scaleX(1.2659);transform-origin:0 0;">09/04/2024</div>
<div class="t" style="left:375.50px;top:146.75px;font-size:12.5px;line-height:12.5px;font-weight:700;transform:scaleX(1.1255);transform-origin:0 0;">14:42</div>
<div class="t" style="left:537.70px;top:119.00px;font-size:12px;line-height:12px;transform:scaleX(1.0073);transform-origin:0 0;">Origine de l'échange</div>
<div class="t" style="left:537.70px;top:147.00px;font-size:12px;line-height:12px;transform:scaleX(0.9124);transform-origin:0 0;">De</div>
<div class="t" style="left:537.70px;top:175.00px;font-size:12px;line-height:12px;transform:scaleX(0.8769);transform-origin:0 0;">Canal</div>
<div class="t" style="left:537.70px;top:203.00px;font-size:12px;line-height:12px;transform:scaleX(1.0109);transform-origin:0 0;">Motif</div>
<div style="position:absolute;left:660px;top:113px;width:170px;height:22px;box-sizing:border-box;border:1px solid #7a7a7a;background:#fff"></div>
<div style="position:absolute;left:814px;top:114px;width:15px;height:20px;background:linear-gradient(#f6f6f6,#d2d2d2)"></div>
<svg style="position:absolute;left:816px;top:120px" width="10" height="8" viewBox="0 0 10 8"><path d="M1 2 L9 2 L5 6.5 Z" fill="#102040"/></svg>
<div style="position:absolute;left:580px;top:141px;width:250px;height:22px;box-sizing:border-box;border:1px solid #7a7a7a;background:#fff"></div>
<div style="position:absolute;left:580px;top:169px;width:250px;height:22px;box-sizing:border-box;border:1px solid #7a7a7a;background:#fff"></div>
<div style="position:absolute;left:814px;top:170px;width:15px;height:20px;background:linear-gradient(#f6f6f6,#d2d2d2)"></div>
<svg style="position:absolute;left:816px;top:176px" width="10" height="8" viewBox="0 0 10 8"><path d="M1 2 L9 2 L5 6.5 Z" fill="#102040"/></svg>
<div style="position:absolute;left:580px;top:197px;width:250px;height:22px;box-sizing:border-box;border:1px solid #7a7a7a;background:#fff"></div>
<div style="position:absolute;left:814px;top:198px;width:15px;height:20px;background:linear-gradient(#f6f6f6,#d2d2d2)"></div>
<svg style="position:absolute;left:816px;top:204px" width="10" height="8" viewBox="0 0 10 8"><path d="M1 2 L9 2 L5 6.5 Z" fill="#102040"/></svg>
<div class="t" style="left:666.40px;top:118.75px;font-size:12.5px;line-height:12.5px;font-weight:700;transform:scaleX(1.0797);transform-origin:0 0;">Producteur</div>
<div class="t" style="left:584.80px;top:146.75px;font-size:12.5px;line-height:12.5px;font-weight:700;transform:scaleX(0.9543);transform-origin:0 0;">MERE MICHEL</div>
<div class="t" style="left:586.50px;top:174.75px;font-size:12.5px;line-height:12.5px;font-weight:700;transform:scaleX(1.0794);transform-origin:0 0;">Visite à la collectivité</div>
<div class="t" style="left:586.30px;top:202.75px;font-size:12.5px;line-height:12.5px;font-weight:700;transform:scaleX(1.0683);transform-origin:0 0;">Octroi de passages</div>
<div style="position:absolute;left:190px;top:238px;width:693px;height:1px;background:#a0a0a0"></div>
<div class="t" style="left:232.00px;top:262.00px;font-size:12px;line-height:12px;transform:scaleX(0.9769);transform-origin:0 0;">Passages complémentaires</div>
<div style="position:absolute;left:400px;top:256px;width:82px;height:22px;box-sizing:border-box;border:1px solid #7a7a7a;background:#ffff96"></div>
<div class="t" style="left:433.40px;top:261.75px;font-size:12.5px;line-height:12.5px;font-weight:700;transform:scaleX(1.1218);transform-origin:0 0;">30</div>
<div style="position:absolute;left:449px;top:262px;width:1px;height:12px;background:#000040"></div>
<div class="t" style="left:230.50px;top:353.00px;font-size:12px;line-height:12px;transform:scaleX(0.9737);transform-origin:0 0;">Observation</div>
<div style="position:absolute;left:230px;top:368px;width:600px;height:93px;box-sizing:border-box;border:1px solid #7a7a7a;background:#fff"></div>
<div class="t" style="left:234.50px;top:372.75px;font-size:12.5px;line-height:12.5px;transform:scaleX(1.0330);transform-origin:0 0;">Suite à chantier de déménagement</div>
<div style="position:absolute;left:190px;top:513px;width:693px;height:1px;background:#a0a0a0"></div>
<div style="position:absolute;left:190px;top:514px;width:693px;height:1px;background:#ffffff"></div>
<svg style="position:absolute;left:518px;top:518px" width="38" height="36" viewBox="0 0 38 36">
<defs><linearGradient id="cg" x1="0" y1="0" x2="0" y2="1"><stop offset="0" stop-color="#14b814"/><stop offset="1" stop-color="#007800"/></linearGradient></defs>
<path d="M4 18 L12 18 L16.5 22 L26 4.5 L34.5 4.5 L19.5 31 L17.5 31.5 Z" fill="url(#cg)"/></svg>
<div class="t" style="left:520.80px;top:552.00px;font-size:12px;line-height:12px;transform:scaleX(0.8446);transform-origin:0 0;">Valider</div>
<div style="position:absolute;left:521px;top:563px;width:7px;height:1px;background:#000"></div>
<svg style="position:absolute;left:826px;top:516px" width="36" height="38" viewBox="0 0 36 38">
<defs><linearGradient id="rg826" x1="0" y1="0" x2="0" y2="1"><stop offset="0" stop-color="#ff0000"/><stop offset="0.45" stop-color="#e80000"/><stop offset="1" stop-color="#8a0000"/></linearGradient></defs>
<path d="M4 6 L16.3 11.9 C19 8.5 23 5.5 27 4 L32.5 7.5 C28.5 9.5 25 12.5 22 15.5 C26 18.5 30 22 31 26 L27.5 31.5 C25.5 26.5 22.5 22.5 19 19 C15.5 23.5 13 29 11.5 35 C9 30 9.5 22 15 14 Z" fill="url(#rg826)"/></svg>
<div class="t" style="left:826.00px;top:552.00px;font-size:12px;line-height:12px;transform:scaleX(0.8604);transform-origin:0 0;">Annuler</div>
<svg style="position:absolute;left:0px;top:0px" width="1024" height="768" viewBox="0 0 1024 768">
<rect x="922.5" y="568" width="94.5" height="77" rx="15" ry="15" fill="none" stroke="#22ac4a" stroke-width="5"/>
<path d="M820.5 592.5 L884.8 592.5 L884.8 572 L946 611 L884.8 650 L884.8 630.7 L820.5 630.7 Z" fill="#fff" stroke="#22ac4a" stroke-width="4.6" stroke-linejoin="miter"/>
<path d="M475 269.5 L523.8 236.7 L523.8 252.3 L573.6 252.3 L573.6 286.5 L523.8 286.5 L523.8 302 Z" fill="#fff" stroke="#22ac4a" stroke-width="4.6" stroke-linejoin="miter"/>
</svg>
</body></html>
